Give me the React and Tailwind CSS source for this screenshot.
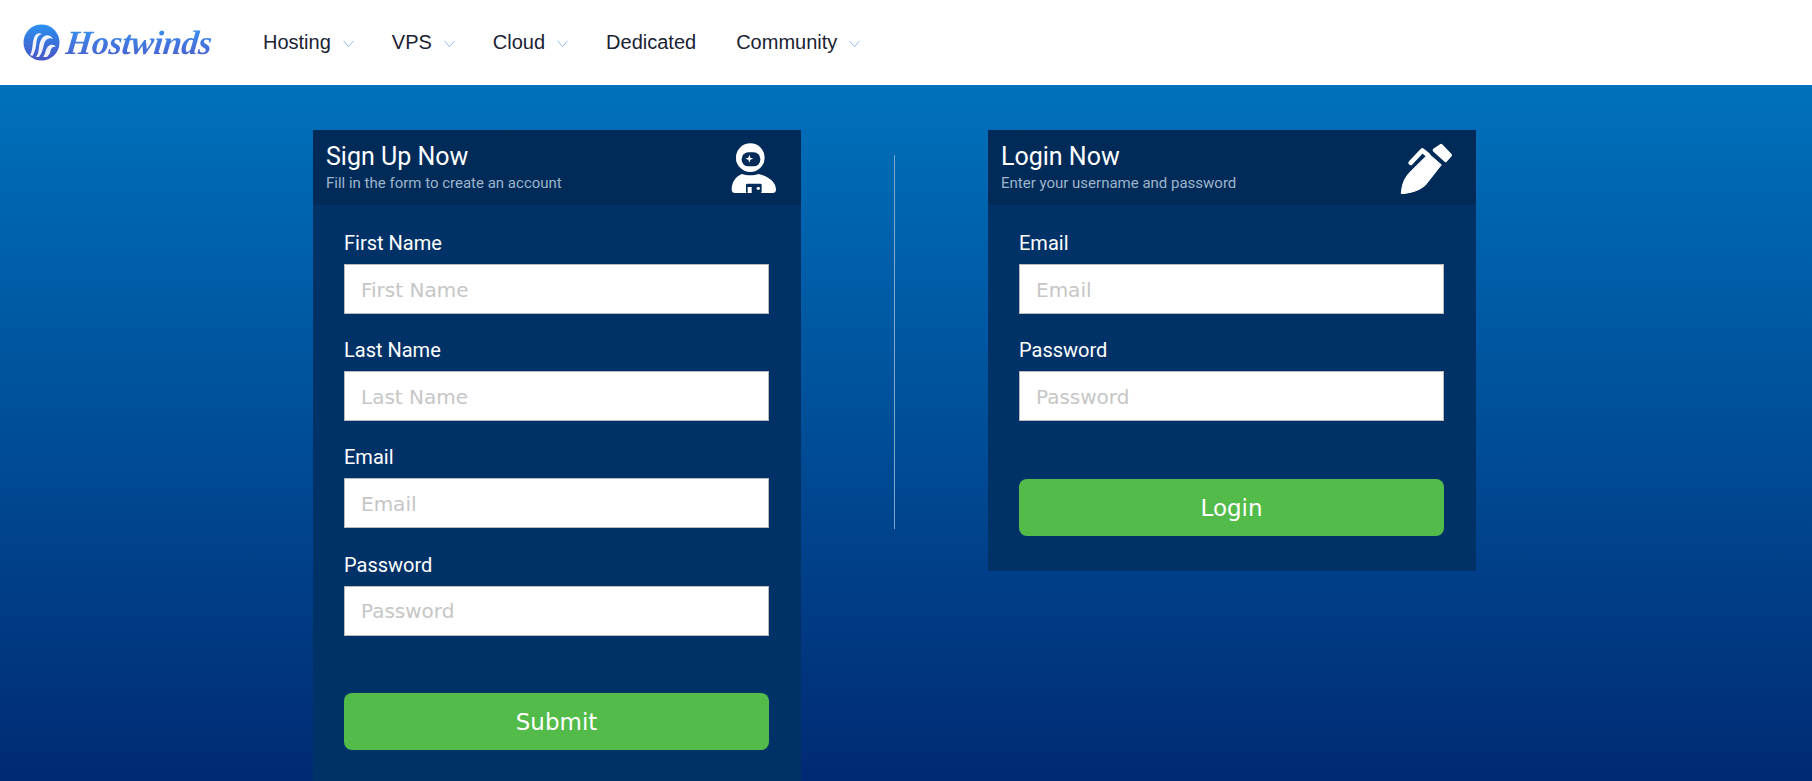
import React from "react";

function Chevron() {
  return (
    <svg width="11" height="8" viewBox="0 0 11 8" className="ml-3 mt-[4px]" fill="none">
      <path d="M0.6 0.8 L5.5 6.8 L10.4 0.8" stroke="#94bdf0" strokeWidth="1" />
    </svg>
  );
}

function NavItem({ label, arrow = true, extra = "" }) {
  return (
    <div className={"flex items-center " + extra}>
      <span>{label}</span>
      {arrow && <Chevron />}
    </div>
  );
}

function Logo() {
  return (
    <div className="flex items-center w-[240px] shrink-0">
      <svg width="37" height="37" viewBox="0 0 37 37">
        <defs>
          <linearGradient id="lg" x1="0" y1="0" x2="0" y2="1">
            <stop offset="0" stopColor="#2a90f0" />
            <stop offset="1" stopColor="#4a55c6" />
          </linearGradient>
        </defs>
        <circle cx="18.5" cy="18.5" r="18" fill="url(#lg)" />
        <path d="M7 31 C10 27 9 19 11 14 C12 10 16 8 19 10 C15 11 14 14 13.5 18 C13 23 12 28 9.5 32 Z" fill="#fff" opacity="0.92" />
        <path d="M13 33 C17 28 15 21 18 16 C21 10 27 10 30 15 C26 13 22.5 15 21 20 C20 25 19 29 16 33 Z" fill="#fff" opacity="0.92" />
        <path d="M20 33 C23 29 22 26 25 22.5 C27.5 20 31 20 33 23 C30 22 28 24 27.5 27 C27 29.5 26 31 24 33 Z" fill="#fff" opacity="0.92" />
      </svg>
      <span className="ml-[6px] -skew-x-6 font-['Liberation_Serif',serif] text-[34px] leading-[42px] font-bold italic tracking-[-0.2px] bg-gradient-to-b from-[#2a9bf6] to-[#4a56c8] bg-clip-text text-transparent pr-1">
        Hostwinds
      </span>
    </div>
  );
}

function Astronaut() {
  return (
    <svg width="50" height="55" viewBox="60 30 150 165" fill="none" className="-mr-[1px] mt-[1px]">
      <rect x="80" y="62" width="82" height="38" rx="9" fill="#fff" />
      <circle cx="121" cy="80" r="43" fill="#fff" />
      <rect x="95" y="64" width="56" height="42" rx="20" fill="#002b59" />
      <path d="M118 71 L121 80 L130 83 L121 86 L118 95 L115 86 L106 83 L115 80 Z" fill="#fff" />
      <path d="M65 176 C65 152 78 136 96 129 C110 134 132 134 146 129 C175 136 198 152 198 176 C198 182 194 186 188 186 L75 186 C69 186 65 182 65 176 Z" fill="#fff" />
      <rect x="108" y="158" width="47" height="28" rx="4" fill="#002b59" />
      <rect x="113" y="168" width="12" height="18" fill="#fff" />
      <circle cx="145" cy="172" r="5" fill="#fff" />
    </svg>
  );
}

function Pen() {
  return (
    <svg width="55" height="52" viewBox="85 45 165 155" fill="none">
      <path d="M92 200 C94 165 105 148 122 131 L174 80 L212 113 L164 174 C145 190 125 196 92 200 Z" fill="#fff" stroke="#fff" strokeWidth="3" strokeLinejoin="round" />
      <path d="M120 107 L155 70 L172 84" stroke="#fff" strokeWidth="14" strokeLinecap="round" strokeLinejoin="round" />
      <path d="M191 69 L211 55 L239 84 L225 100 Z" fill="#fff" stroke="#fff" strokeWidth="10" strokeLinejoin="round" />
    </svg>
  );
}

function Field({ label }) {
  return (
    <div className="mb-[23.2px]">
      <label className="block h-[27px] mb-[7px] font-['Roboto',sans-serif] text-[20px] leading-[27px] text-white">
        {label}
      </label>
      <input
        placeholder={label}
        className="block w-full h-[50px] pl-[16px] pr-[15px] pt-[1px] bg-white border border-[#b9b9b9] font-['DejaVu_Sans',sans-serif] text-[20px] text-black placeholder:text-[#c6c6c6] outline-none"
      />
    </div>
  );
}

function Panel({ title, sub, icon, fields, button }) {
  return (
    <div className="w-[488px] bg-[#003268] shrink-0 self-start">
      <div className="h-[75px] bg-[#002b59] pl-[13px] pr-[22px] flex items-center justify-between font-['Roboto',sans-serif]">
        <div className="pt-[1px]">
          <div className="text-[25px] leading-[28px] text-white">{title}</div>
          <div className="text-[15px] leading-[20px] text-[#9db4cb] mt-[2px]">{sub}</div>
        </div>
        {icon}
      </div>
      <div className="pl-[31px] pr-[32px] pt-[25px] pb-[35px]">
        {fields.map((f) => (
          <Field key={f} label={f} />
        ))}
        <button className="block w-full h-[57px] mt-[57.5px] pt-[2px] rounded-[8px] bg-[#52bb4a] font-['DejaVu_Sans',sans-serif] text-[23px] text-white">
          {button}
        </button>
      </div>
    </div>
  );
}

export default function App() {
  return (
    <div className="h-screen overflow-hidden flex flex-col">
      <header className="h-[85px] shrink-0 bg-white flex items-center pl-[23px]">
        <Logo />
        <nav className="pb-[2px] flex items-center gap-[38px] font-['Liberation_Sans',sans-serif] text-[20px] text-[#1a2233]">
          <NavItem label="Hosting" />
          <NavItem label="VPS" />
          <NavItem label="Cloud" />
          <NavItem label="Dedicated" arrow={false} extra="mr-[2px]" />
          <NavItem label="Community" />
        </nav>
      </header>
      <main className="flex-1 flex pl-[313px] pt-[45px] bg-gradient-to-b from-[#0071bc] to-[#002a73]">
        <Panel
          title="Sign Up Now"
          sub="Fill in the form to create an account"
          icon={<Astronaut />}
          fields={["First Name", "Last Name", "Email", "Password"]}
          button="Submit"
        />
        <div className="w-px h-[374px] mt-[25px] ml-[93px] mr-[93px] bg-[#7fa6cc] shrink-0" />
        <Panel
          title="Login Now"
          sub="Enter your username and password"
          icon={<Pen />}
          fields={["Email", "Password"]}
          button="Login"
        />
      </main>
    </div>
  );
}
